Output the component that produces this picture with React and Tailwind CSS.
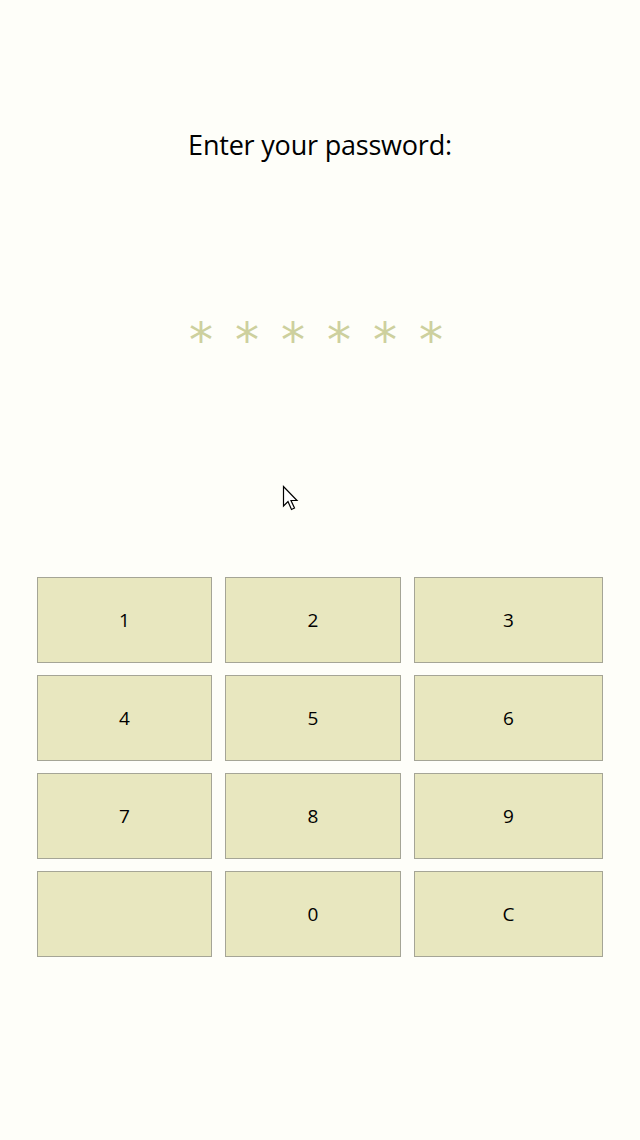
const keys = ['1', '2', '3', '4', '5', '6', '7', '8', '9', '', '0', 'C'];

const Cursor = () => (
  <svg width="20" height="30" viewBox="0 0 20 30" className="absolute left-[282px] top-[485px]">
    <path
      d="M1.5 1.5 L1.5 21 L6 16.5 L9.5 24.5 L12.5 23 L9 15.5 L15 15.5 Z"
      fill="#ffffff"
      stroke="#000000"
      strokeWidth="1.2"
      strokeLinejoin="miter"
    />
  </svg>
);

const App = () => {
  return (
    <div className="relative w-[640px] h-[1140px] bg-[#fefef9] font-['Open_Sans',sans-serif] text-black">
      <div className="pt-[127px] text-center text-[27px] leading-[36px] tracking-[-0.2px]">Enter your password:</div>

      <div className="mt-[151px] flex justify-center gap-[20px] pr-[8px] text-[#cdd09e] text-[48px] leading-[52px] font-['DejaVu_Sans',sans-serif]">
        {[0, 1, 2, 3, 4, 5].map((i) => (
          <span key={i} className="w-[26px] text-center">*</span>
        ))}
      </div>

      <Cursor />

      <div className="mt-[211px] ml-[37px] grid grid-cols-[175px_176px_189px] gap-x-[13px] gap-y-[12px]">
        {keys.map((k, i) => (
          <div
            key={i}
            className="h-[86px] flex items-center justify-center bg-[#e8e7bf] border border-[#a5a596] text-[19px]"
          >
            {k}
          </div>
        ))}
      </div>
    </div>
  );
};

export default App;
